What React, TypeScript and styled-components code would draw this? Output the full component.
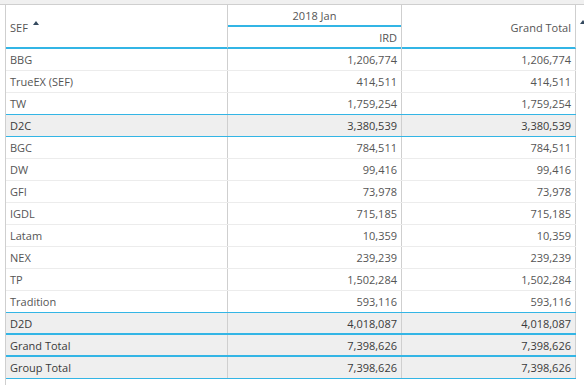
import styled, { createGlobalStyle } from "styled-components";

const GlobalStyle = createGlobalStyle`
  html, body {
    margin: 0;
    padding: 0;
    background: #fff;
  }
  body {
    font-family: "Open Sans", "Liberation Sans", sans-serif;
    font-size: 11px;
    color: #555;
  }
`;

type Line = "light" | "blue" | "thick";

interface RowData {
  label: string;
  ird: string;
  total: string;
  group?: boolean;
  line: Line;
}

const rows: RowData[] = [
  { label: "BBG", ird: "1,206,774", total: "1,206,774", line: "light" },
  { label: "TrueEX (SEF)", ird: "414,511", total: "414,511", line: "light" },
  { label: "TW", ird: "1,759,254", total: "1,759,254", line: "blue" },
  { label: "D2C", ird: "3,380,539", total: "3,380,539", group: true, line: "blue" },
  { label: "BGC", ird: "784,511", total: "784,511", line: "light" },
  { label: "DW", ird: "99,416", total: "99,416", line: "light" },
  { label: "GFI", ird: "73,978", total: "73,978", line: "light" },
  { label: "IGDL", ird: "715,185", total: "715,185", line: "light" },
  { label: "Latam", ird: "10,359", total: "10,359", line: "light" },
  { label: "NEX", ird: "239,239", total: "239,239", line: "light" },
  { label: "TP", ird: "1,502,284", total: "1,502,284", line: "light" },
  { label: "Tradition", ird: "593,116", total: "593,116", line: "blue" },
  { label: "D2D", ird: "4,018,087", total: "4,018,087", group: true, line: "thick" },
  { label: "Grand Total", ird: "7,398,626", total: "7,398,626", group: true, line: "thick" },
  { label: "Group Total", ird: "7,398,626", total: "7,398,626", group: true, line: "blue" },
];

export default function App() {
  return (
    <>
      <GlobalStyle />
      <Page>
        <TopStrip />
        <Frame>
          <Grid>
            <Header>
              <HeadCell $span>
                SEF
                <SortArrow />
              </HeadCell>
              <PeriodCol>
                <PeriodTitle>2018 Jan</PeriodTitle>
                <PeriodSub>IRD</PeriodSub>
              </PeriodCol>
              <HeadCell $span $right>
                Grand Total
              </HeadCell>
            </Header>
            {rows.map((r) => (
              <Row key={r.label} $group={r.group} $line={r.line}>
                <Cell>{r.label}</Cell>
                <Cell $right>{r.ird}</Cell>
                <Cell $right>{r.total}</Cell>
              </Row>
            ))}
          </Grid>
          <Gutter>
            <GutterArrow />
          </Gutter>
        </Frame>
      </Page>
    </>
  );
}

const Page = styled.div`
  width: 584px;
  height: 385px;
  overflow: hidden;
  display: flex;
  flex-direction: column;
`;

const TopStrip = styled.div`
  height: 4px;
  background: #f0f0f0;
  border-bottom: 1px solid #cfcfcf;
  flex-shrink: 0;
`;

const Frame = styled.div`
  flex: 1;
  display: flex;
  margin-left: 5px;
  border-left: 1px solid #cfcfcf;
`;

const Grid = styled.div`
  width: 570px;
  display: flex;
  flex-direction: column;
`;

const Header = styled.div`
  display: grid;
  grid-template-columns: 222px 174px 174px;
  height: 44px;
`;

const HeadCell = styled.div<{ $span?: boolean; $right?: boolean }>`
  display: flex;
  align-items: center;
  justify-content: ${(p) => (p.$right ? "flex-end" : "flex-start")};
  padding: 2px 4px 0 4px;
  border-right: 1px solid #cfcfcf;
  border-bottom: 2px solid #33b5e5;
  color: #555;
  position: relative;
`;

const SortArrow = styled.span`
  display: inline-block;
  width: 0;
  height: 0;
  margin-left: 5px;
  margin-bottom: 8px;
  border-left: 3.5px solid transparent;
  border-right: 3.5px solid transparent;
  border-bottom: 4px solid #34495e;
`;

const PeriodCol = styled.div`
  display: flex;
  flex-direction: column;
  border-right: 1px solid #cfcfcf;
`;

const PeriodTitle = styled.div`
  height: 20px;
  border-bottom: 2px solid #33b5e5;
  display: flex;
  align-items: center;
  justify-content: center;
  color: #555;
`;

const PeriodSub = styled.div`
  flex: 1;
  border-bottom: 2px solid #33b5e5;
  display: flex;
  align-items: center;
  justify-content: flex-end;
  padding: 0 4px;
  color: #555;
`;

const lineColor: Record<Line, string> = {
  light: "1px solid #ececec",
  blue: "1px solid #33b5e5",
  thick: "2px solid #33b5e5",
};

const Row = styled.div<{ $group?: boolean; $line: Line }>`
  display: grid;
  grid-template-columns: 222px 174px 174px;
  height: 22px;
  box-sizing: border-box;
  background: ${(p) => (p.$group ? "#efefef" : "#fff")};
  border-bottom: ${(p) => lineColor[p.$line]};
  color: ${(p) => (p.$group ? "#3a3a3a" : "#555")};
`;

const Cell = styled.div<{ $right?: boolean }>`
  display: flex;
  align-items: center;
  justify-content: ${(p) => (p.$right ? "flex-end" : "flex-start")};
  padding: 0 4px;
  border-right: 1px solid #cfcfcf;
  white-space: nowrap;
`;

const Gutter = styled.div`
  flex: 1;
  position: relative;
`;

const GutterArrow = styled.span`
  position: absolute;
  left: 4px;
  top: 15px;
  width: 0;
  height: 0;
  border-left: 3.5px solid transparent;
  border-right: 3.5px solid transparent;
  border-bottom: 4px solid #34495e;
`;
